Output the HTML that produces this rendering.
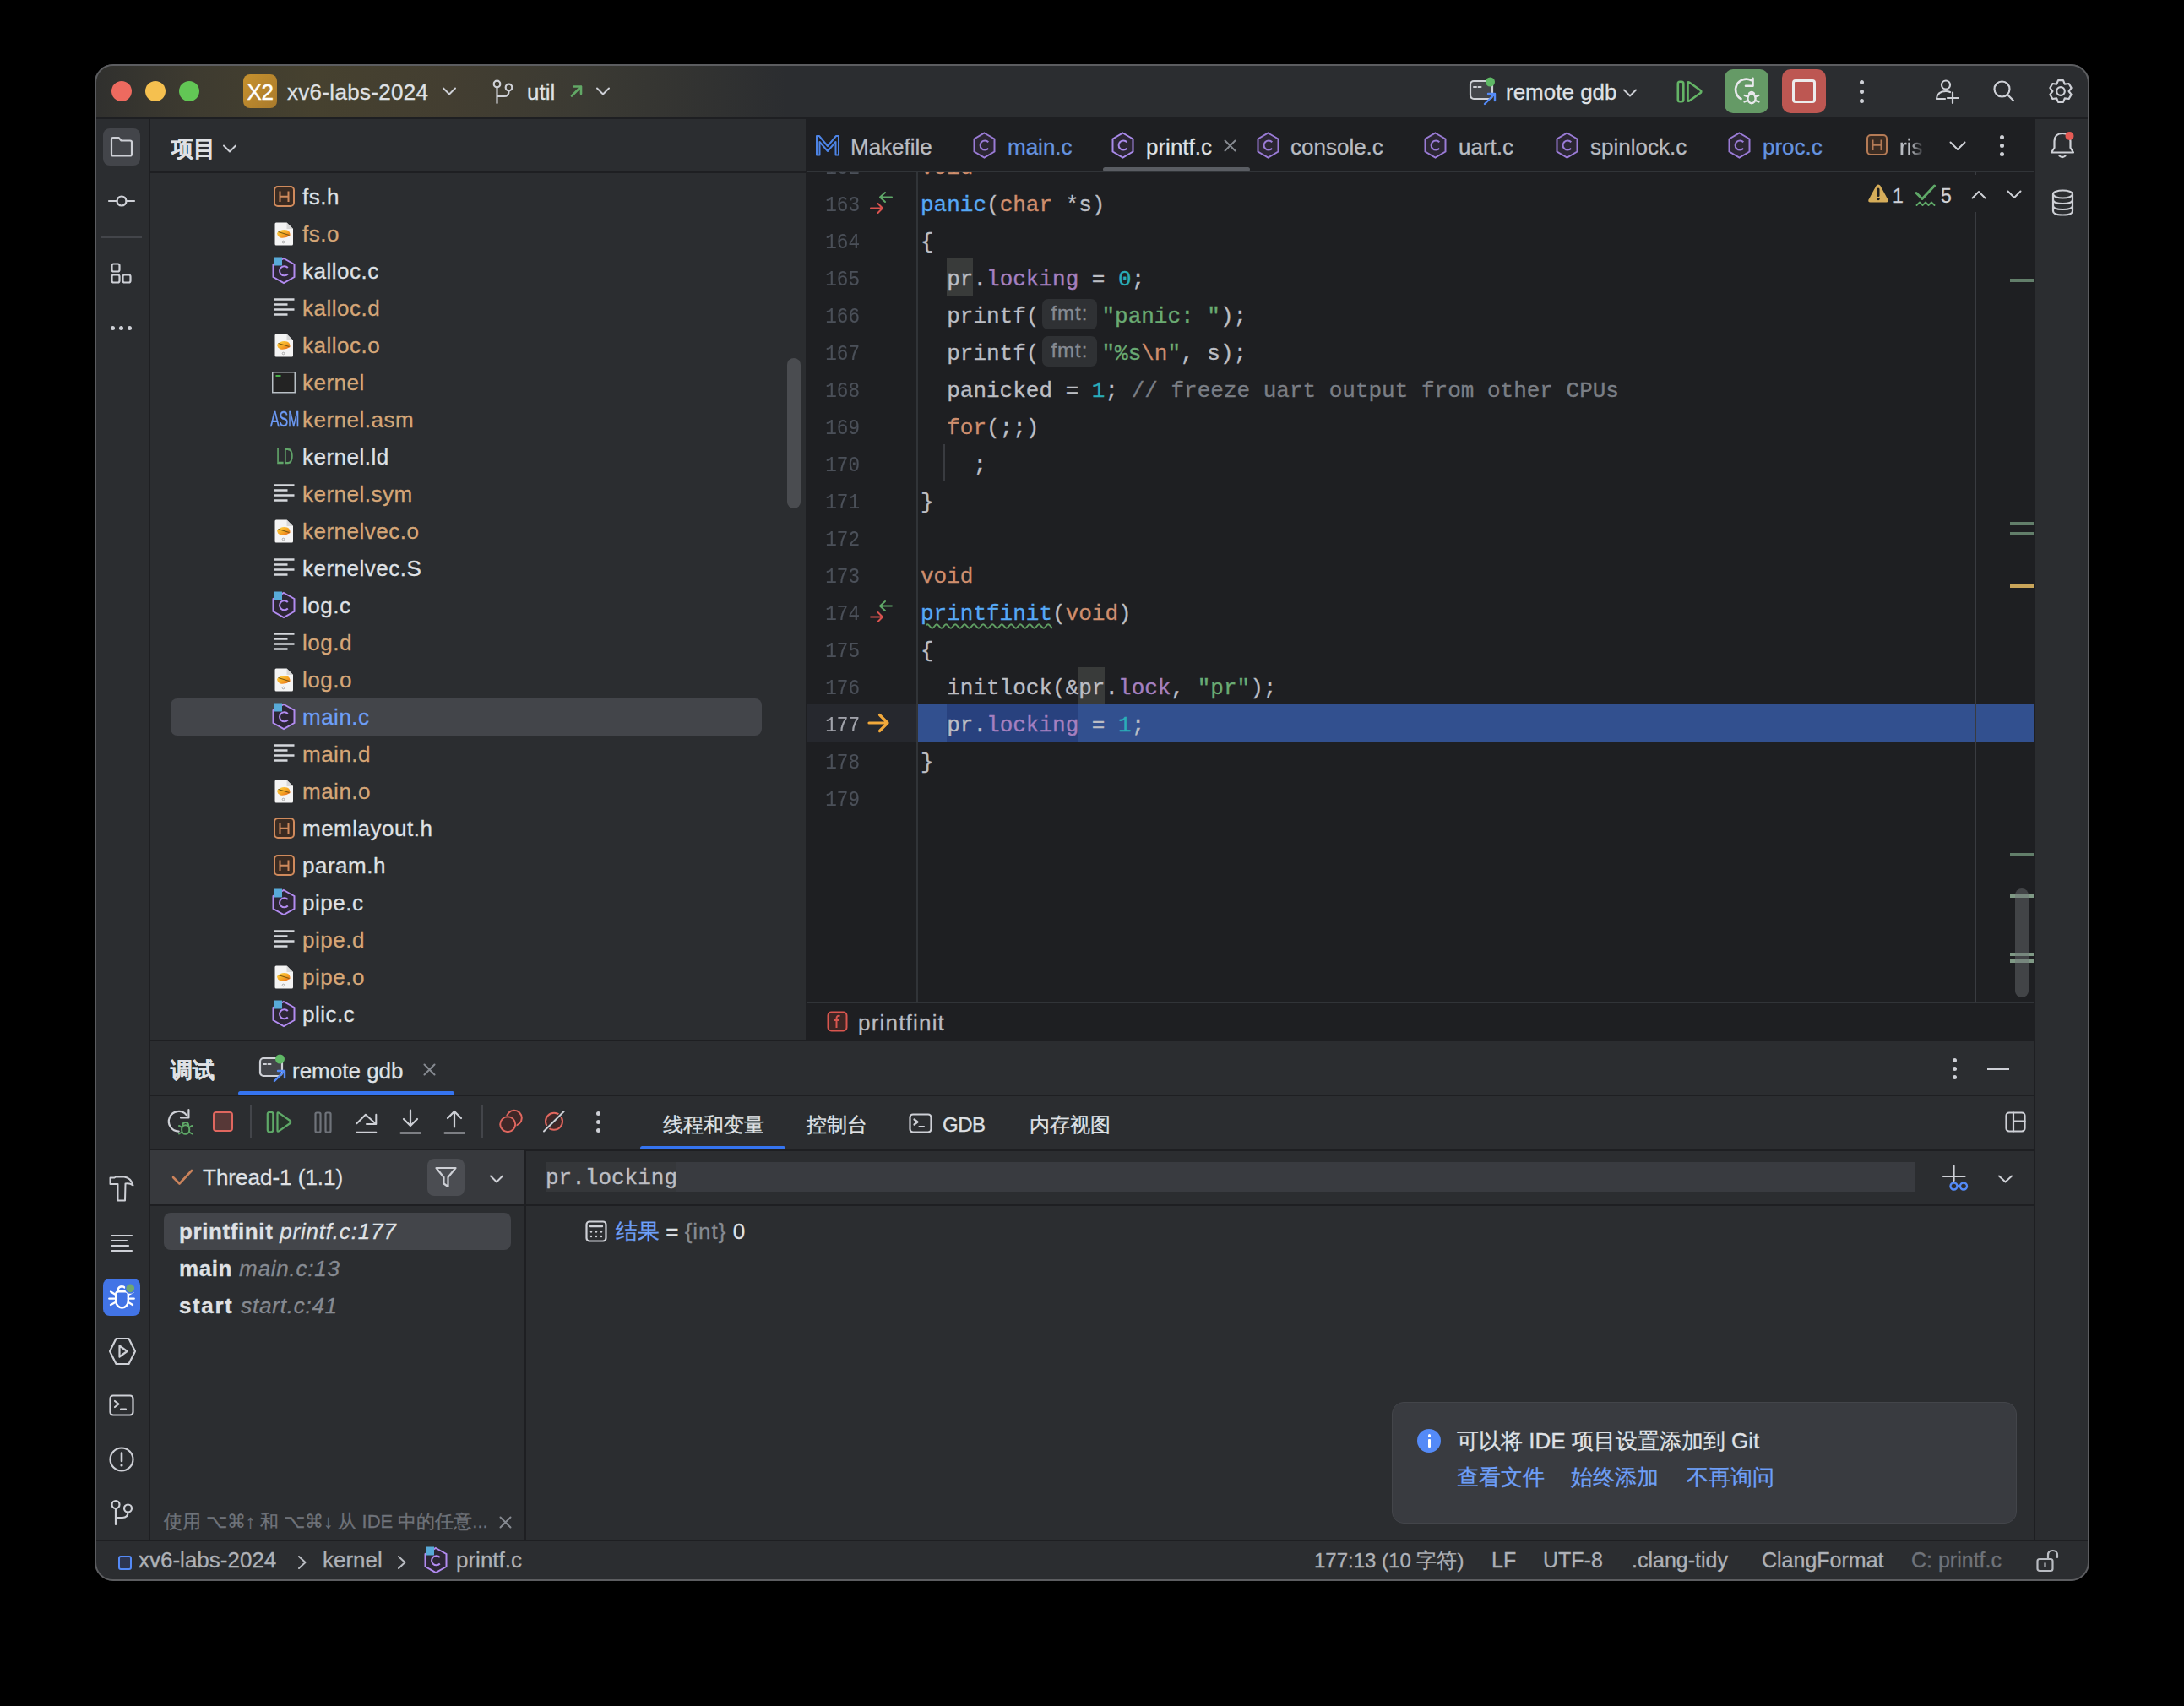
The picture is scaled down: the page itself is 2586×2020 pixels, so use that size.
<!DOCTYPE html>
<html><head><meta charset="utf-8">
<style>
*{margin:0;padding:0;box-sizing:border-box}
html,body{width:2586px;height:2020px;background:#000;overflow:hidden;font-family:"Liberation Sans",sans-serif;color:#dfe1e5}
.a{position:absolute}
.t{position:absolute;white-space:pre;font-size:26px;line-height:30px;-webkit-text-stroke:0.3px currentColor}
.m{font-family:"Liberation Mono",monospace;-webkit-text-stroke:0.35px}
svg.i{position:absolute;overflow:visible;fill:none;stroke:#ced0d6;stroke-width:2.2;stroke-linecap:round;stroke-linejoin:round}
#win{position:absolute;left:0;top:0;width:2586px;height:2020px;background:#2b2d30;clip-path:inset(76px 112px 148px 112px round 22px)}
</style></head><body>
<div id="win">
<!-- title bar -->
<div class="a" style="left:112px;top:76px;width:2362px;height:64px;background:linear-gradient(90deg,#30302e 0px,#3e3b30 120px,#46412f 260px,#433e31 420px,#3b3a33 580px,#2b2d30 820px)"></div>

<!-- traffic lights -->
<div class="a" style="left:132px;top:96px;width:24px;height:24px;border-radius:50%;background:#ee6a5f"></div>
<div class="a" style="left:172px;top:96px;width:24px;height:24px;border-radius:50%;background:#f5c04f"></div>
<div class="a" style="left:212px;top:96px;width:24px;height:24px;border-radius:50%;background:#62c655"></div>
<!-- project badge -->
<div class="a" style="left:288px;top:88px;width:40px;height:40px;border-radius:8px;background:linear-gradient(135deg,#c6912e,#a97a2c)"></div>
<div class="t" style="left:288px;top:94px;width:40px;text-align:center;font-size:26px;color:#fff;letter-spacing:-0.5px;-webkit-text-stroke:0.4px #fff">X2</div>
<div class="t" style="left:340px;top:94px;color:#dfe1e5;letter-spacing:0.3px">xv6-labs-2024</div>
<svg class="i" style="left:524px;top:103px" width="16" height="10"><path d="M1 1.5 L8 8.5 L15 1.5" stroke="#ced0d6" stroke-width="2"/></svg>
<!-- branch -->
<svg class="i" style="left:584px;top:95px" width="24" height="28"><circle cx="4.5" cy="4.5" r="3.8"/><circle cx="18.5" cy="8.5" r="3.8"/><path d="M4.5 8.3 V27 M4.5 19 H13 Q18.5 19 18.5 13"/></svg>
<div class="t" style="left:624px;top:94px">util</div>
<svg class="i" style="left:675px;top:101px" width="15" height="14"><path d="M2 12.5 L13 1.5 M4.5 1.5 H13 V10" stroke="#62a866" stroke-width="2.6"/></svg>
<svg class="i" style="left:706px;top:103px" width="16" height="10"><path d="M1 1.5 L8 8.5 L15 1.5" stroke="#ced0d6" stroke-width="2"/></svg>
<!-- run config -->
<svg class="i" style="left:1740px;top:92px" width="32" height="32"><rect x="1" y="4" width="26" height="21" rx="4" fill="#43454a" stroke="#ced0d6"/><path d="M5 11 H8 M10.5 11 H13.5" stroke-width="2"/><circle cx="24.5" cy="5" r="5.5" fill="#5fb865" stroke="none"/><path d="M18 31 L30 19 M22 19 H30 V27" stroke="#548af7" stroke-width="2.4" /></svg>
<div class="t" style="left:1783px;top:94px">remote gdb</div>
<svg class="i" style="left:1922px;top:105px" width="16" height="10"><path d="M1 1.5 L8 8.5 L15 1.5" stroke="#ced0d6" stroke-width="2"/></svg>
<!-- resume -->
<svg class="i" style="left:1985px;top:95px" width="32" height="27"><rect x="1.8" y="1.8" width="6.5" height="23.5" rx="2.2" stroke="#64b366" stroke-width="2.6"/><path d="M13.5 3.5 Q13.5 1.5 15.5 2.8 L28.5 12 Q30 13.5 28.5 15 L15.5 24.2 Q13.5 25.5 13.5 23.5 Z" stroke="#64b366" stroke-width="2.6"/></svg>
<!-- debug btn -->
<div class="a" style="left:2042px;top:82px;width:52px;height:52px;border-radius:10px;background:#659a66"></div>
<svg class="i" style="left:2054px;top:92px" width="34" height="34"><path d="M7.5 25 A11.5 11.5 0 0 1 19.5 3.2" stroke="#e8e8ec" stroke-width="2.6"/><path d="M21.5 0.8 V9.8 H13" stroke="#e8e8ec" stroke-width="2.6"/><ellipse cx="20" cy="24.5" rx="4.6" ry="5.8" stroke="#e8e8ec" stroke-width="2.4"/><path d="M17 18.5 Q20 15 23 18.5" stroke="#e8e8ec" stroke-width="2.2"/><path d="M11.5 21 L15.5 22.5 M28.5 21 L24.5 22.5 M11.5 28.5 L15.5 27 M28.5 28.5 L24.5 27" stroke="#e8e8ec" stroke-width="2.2"/></svg>
<!-- stop btn -->
<div class="a" style="left:2110px;top:82px;width:52px;height:52px;border-radius:10px;background:#bd5752"></div>
<div class="a" style="left:2122px;top:94px;width:28px;height:28px;border-radius:4px;border:3px solid #ececec"></div>
<!-- kebab -->
<div class="a" style="left:2201.5px;top:94.5px;width:5px;height:5px;border-radius:50%;background:#ced0d6;box-shadow:0 11px 0 #ced0d6,0 22px 0 #ced0d6"></div>
<!-- person add -->
<svg class="i" style="left:2292px;top:94px" width="30" height="30"><circle cx="12" cy="6.5" r="5"/><path d="M1 23 Q2 14 12 14 Q15 14 17 15 M1 23 H11 M20 15.5 V28 M14 22 H27"/></svg>
<!-- search -->
<svg class="i" style="left:2360px;top:95px" width="26" height="26"><circle cx="10.5" cy="10.5" r="9"/><path d="M17 17 L24 24"/></svg>
<!-- gear -->
<svg class="i" style="left:2426px;top:94px" width="28" height="28"><path d="M11.03 1.14 L16.97 1.14 L18.80 5.69 L23.65 5.00 L26.62 10.14 L23.60 14.00 L26.62 17.86 L23.65 23.00 L18.80 22.31 L16.97 26.86 L11.03 26.86 L9.20 22.31 L4.35 23.00 L1.38 17.86 L4.40 14.00 L1.38 10.14 L4.35 5.00 L9.20 5.69 Z" stroke-width="2.2"/><circle cx="14" cy="14" r="4.8"/></svg>
<!-- project panel -->
<div class="t" style="left:203px;top:161px;font-weight:bold">项目</div>
<svg class="i" style="left:264px;top:171px" width="16" height="10"><path d="M1 1.5 L8 8.5 L15 1.5" stroke="#ced0d6" stroke-width="2"/></svg>
<div class="a" style="left:932px;top:424px;width:16px;height:178px;border-radius:8px;background:#4a4c50"></div>
<svg class="a" style="left:322px;top:219px" width="28" height="28" viewBox="0 0 28 28"><rect x="3" y="2" width="23" height="23" rx="4" fill="#3a2b22" stroke="#cf8a5c" stroke-width="2"/><path d="M9.5 7.5 V20 M19.5 7.5 V20 M9.5 13.8 H19.5" stroke="#cf8a5c" stroke-width="2" fill="none"/></svg>
<div class="t" style="left:358px;top:218px;color:#dfe1e5;letter-spacing:0.5px">fs.h</div>
<svg class="a" style="left:324px;top:262px" width="24" height="30" viewBox="0 0 24 30"><defs><linearGradient id="og277" x1="0" y1="0" x2="1" y2="1"><stop offset="0" stop-color="#ffd84a"/><stop offset="0.55" stop-color="#f5a524"/><stop offset="1" stop-color="#e8611c"/></linearGradient></defs><path d="M3 1.5 H15.5 L23 9 V27 Q23 28.5 21.5 28.5 H3 Q1.5 28.5 1.5 27 V3 Q1.5 1.5 3 1.5 Z" fill="#f4f4f4"/><path d="M15.5 1.5 V9 H23 Z" fill="#d8d8d8"/><path d="M4 14 Q9 8.5 16 10.5 Q20 12 19.5 17 Q14 20.5 8 19.5 Q4.5 18 4 14 Z" fill="url(#og277)"/><path d="M5.5 12.5 L18.5 16.5" stroke="#7a5a10" stroke-width="1.1"/><circle cx="11.5" cy="24.5" r="1.3" fill="none" stroke="#999" stroke-width="0.8"/></svg>
<div class="t" style="left:358px;top:262px;color:#d5a677;letter-spacing:0.5px">fs.o</div>
<svg class="a" style="left:321px;top:304px" width="30" height="33" viewBox="0 0 30 33"><path d="M15 2 L27.5 9 V24 L15 31 L2.5 24 V9 Z" fill="#2c2635" stroke="#b28bf0" stroke-width="2"/><path d="M19.8 13 A5.6 5.6 0 1 0 19.8 20.5" fill="none" stroke="#b28bf0" stroke-width="2"/><rect x="3" y="0.5" width="10" height="10" fill="#58aad8"/></svg>
<div class="t" style="left:358px;top:306px;color:#dfe1e5;letter-spacing:0.5px">kalloc.c</div>
<svg class="a" style="left:324px;top:351px" width="26" height="26" viewBox="0 0 26 26"><path d="M1 3.5 H24.5 M1 9.5 H16.5 M1 15.5 H24.5 M1 21.5 H16.5" stroke="#d5d7dc" stroke-width="2.6" fill="none"/></svg>
<div class="t" style="left:358px;top:350px;color:#d5a677;letter-spacing:0.5px">kalloc.d</div>
<svg class="a" style="left:324px;top:394px" width="24" height="30" viewBox="0 0 24 30"><defs><linearGradient id="og409" x1="0" y1="0" x2="1" y2="1"><stop offset="0" stop-color="#ffd84a"/><stop offset="0.55" stop-color="#f5a524"/><stop offset="1" stop-color="#e8611c"/></linearGradient></defs><path d="M3 1.5 H15.5 L23 9 V27 Q23 28.5 21.5 28.5 H3 Q1.5 28.5 1.5 27 V3 Q1.5 1.5 3 1.5 Z" fill="#f4f4f4"/><path d="M15.5 1.5 V9 H23 Z" fill="#d8d8d8"/><path d="M4 14 Q9 8.5 16 10.5 Q20 12 19.5 17 Q14 20.5 8 19.5 Q4.5 18 4 14 Z" fill="url(#og409)"/><path d="M5.5 12.5 L18.5 16.5" stroke="#7a5a10" stroke-width="1.1"/><circle cx="11.5" cy="24.5" r="1.3" fill="none" stroke="#999" stroke-width="0.8"/></svg>
<div class="t" style="left:358px;top:394px;color:#d5a677;letter-spacing:0.5px">kalloc.o</div>
<svg class="a" style="left:322px;top:440px" width="28" height="26" viewBox="0 0 28 26"><rect x="0.75" y="0.75" width="26.5" height="24" fill="#232323" stroke="#b9c0c6" stroke-width="1.5"/><path d="M4.5 5 H10.5" stroke="#4fc04f" stroke-width="1.8"/></svg>
<div class="t" style="left:358px;top:438px;color:#d5a677;letter-spacing:0.5px">kernel</div>
<div class="t" style="left:320px;top:481px;font-size:26px;color:#6d9bf7;transform:scaleX(0.62);transform-origin:0 0;letter-spacing:-0.5px">ASM</div>
<div class="t" style="left:358px;top:482px;color:#d5a677;letter-spacing:0.5px">kernel.asm</div>
<div class="t" style="left:327px;top:525px;font-size:26px;color:#62a56a;transform:scaleX(0.62);transform-origin:0 0;letter-spacing:-0.5px">LD</div>
<div class="t" style="left:358px;top:526px;color:#dfe1e5;letter-spacing:0.5px">kernel.ld</div>
<svg class="a" style="left:324px;top:571px" width="26" height="26" viewBox="0 0 26 26"><path d="M1 3.5 H24.5 M1 9.5 H16.5 M1 15.5 H24.5 M1 21.5 H16.5" stroke="#d5d7dc" stroke-width="2.6" fill="none"/></svg>
<div class="t" style="left:358px;top:570px;color:#d5a677;letter-spacing:0.5px">kernel.sym</div>
<svg class="a" style="left:324px;top:614px" width="24" height="30" viewBox="0 0 24 30"><defs><linearGradient id="og629" x1="0" y1="0" x2="1" y2="1"><stop offset="0" stop-color="#ffd84a"/><stop offset="0.55" stop-color="#f5a524"/><stop offset="1" stop-color="#e8611c"/></linearGradient></defs><path d="M3 1.5 H15.5 L23 9 V27 Q23 28.5 21.5 28.5 H3 Q1.5 28.5 1.5 27 V3 Q1.5 1.5 3 1.5 Z" fill="#f4f4f4"/><path d="M15.5 1.5 V9 H23 Z" fill="#d8d8d8"/><path d="M4 14 Q9 8.5 16 10.5 Q20 12 19.5 17 Q14 20.5 8 19.5 Q4.5 18 4 14 Z" fill="url(#og629)"/><path d="M5.5 12.5 L18.5 16.5" stroke="#7a5a10" stroke-width="1.1"/><circle cx="11.5" cy="24.5" r="1.3" fill="none" stroke="#999" stroke-width="0.8"/></svg>
<div class="t" style="left:358px;top:614px;color:#d5a677;letter-spacing:0.5px">kernelvec.o</div>
<svg class="a" style="left:324px;top:659px" width="26" height="26" viewBox="0 0 26 26"><path d="M1 3.5 H24.5 M1 9.5 H16.5 M1 15.5 H24.5 M1 21.5 H16.5" stroke="#d5d7dc" stroke-width="2.6" fill="none"/></svg>
<div class="t" style="left:358px;top:658px;color:#dfe1e5;letter-spacing:0.5px">kernelvec.S</div>
<svg class="a" style="left:321px;top:700px" width="30" height="33" viewBox="0 0 30 33"><path d="M15 2 L27.5 9 V24 L15 31 L2.5 24 V9 Z" fill="#2c2635" stroke="#b28bf0" stroke-width="2"/><path d="M19.8 13 A5.6 5.6 0 1 0 19.8 20.5" fill="none" stroke="#b28bf0" stroke-width="2"/><rect x="3" y="0.5" width="10" height="10" fill="#58aad8"/></svg>
<div class="t" style="left:358px;top:702px;color:#dfe1e5;letter-spacing:0.5px">log.c</div>
<svg class="a" style="left:324px;top:747px" width="26" height="26" viewBox="0 0 26 26"><path d="M1 3.5 H24.5 M1 9.5 H16.5 M1 15.5 H24.5 M1 21.5 H16.5" stroke="#d5d7dc" stroke-width="2.6" fill="none"/></svg>
<div class="t" style="left:358px;top:746px;color:#d5a677;letter-spacing:0.5px">log.d</div>
<svg class="a" style="left:324px;top:790px" width="24" height="30" viewBox="0 0 24 30"><defs><linearGradient id="og805" x1="0" y1="0" x2="1" y2="1"><stop offset="0" stop-color="#ffd84a"/><stop offset="0.55" stop-color="#f5a524"/><stop offset="1" stop-color="#e8611c"/></linearGradient></defs><path d="M3 1.5 H15.5 L23 9 V27 Q23 28.5 21.5 28.5 H3 Q1.5 28.5 1.5 27 V3 Q1.5 1.5 3 1.5 Z" fill="#f4f4f4"/><path d="M15.5 1.5 V9 H23 Z" fill="#d8d8d8"/><path d="M4 14 Q9 8.5 16 10.5 Q20 12 19.5 17 Q14 20.5 8 19.5 Q4.5 18 4 14 Z" fill="url(#og805)"/><path d="M5.5 12.5 L18.5 16.5" stroke="#7a5a10" stroke-width="1.1"/><circle cx="11.5" cy="24.5" r="1.3" fill="none" stroke="#999" stroke-width="0.8"/></svg>
<div class="t" style="left:358px;top:790px;color:#d5a677;letter-spacing:0.5px">log.o</div>
<div class="a" style="left:202px;top:827px;width:700px;height:44px;border-radius:8px;background:#43454a"></div>
<svg class="a" style="left:321px;top:832px" width="30" height="33" viewBox="0 0 30 33"><path d="M15 2 L27.5 9 V24 L15 31 L2.5 24 V9 Z" fill="#2c2635" stroke="#b28bf0" stroke-width="2"/><path d="M19.8 13 A5.6 5.6 0 1 0 19.8 20.5" fill="none" stroke="#b28bf0" stroke-width="2"/><rect x="3" y="0.5" width="10" height="10" fill="#58aad8"/></svg>
<div class="t" style="left:358px;top:834px;color:#6e9ff7;letter-spacing:0.5px">main.c</div>
<svg class="a" style="left:324px;top:879px" width="26" height="26" viewBox="0 0 26 26"><path d="M1 3.5 H24.5 M1 9.5 H16.5 M1 15.5 H24.5 M1 21.5 H16.5" stroke="#d5d7dc" stroke-width="2.6" fill="none"/></svg>
<div class="t" style="left:358px;top:878px;color:#d5a677;letter-spacing:0.5px">main.d</div>
<svg class="a" style="left:324px;top:922px" width="24" height="30" viewBox="0 0 24 30"><defs><linearGradient id="og937" x1="0" y1="0" x2="1" y2="1"><stop offset="0" stop-color="#ffd84a"/><stop offset="0.55" stop-color="#f5a524"/><stop offset="1" stop-color="#e8611c"/></linearGradient></defs><path d="M3 1.5 H15.5 L23 9 V27 Q23 28.5 21.5 28.5 H3 Q1.5 28.5 1.5 27 V3 Q1.5 1.5 3 1.5 Z" fill="#f4f4f4"/><path d="M15.5 1.5 V9 H23 Z" fill="#d8d8d8"/><path d="M4 14 Q9 8.5 16 10.5 Q20 12 19.5 17 Q14 20.5 8 19.5 Q4.5 18 4 14 Z" fill="url(#og937)"/><path d="M5.5 12.5 L18.5 16.5" stroke="#7a5a10" stroke-width="1.1"/><circle cx="11.5" cy="24.5" r="1.3" fill="none" stroke="#999" stroke-width="0.8"/></svg>
<div class="t" style="left:358px;top:922px;color:#d5a677;letter-spacing:0.5px">main.o</div>
<svg class="a" style="left:322px;top:967px" width="28" height="28" viewBox="0 0 28 28"><rect x="3" y="2" width="23" height="23" rx="4" fill="#3a2b22" stroke="#cf8a5c" stroke-width="2"/><path d="M9.5 7.5 V20 M19.5 7.5 V20 M9.5 13.8 H19.5" stroke="#cf8a5c" stroke-width="2" fill="none"/></svg>
<div class="t" style="left:358px;top:966px;color:#dfe1e5;letter-spacing:0.5px">memlayout.h</div>
<svg class="a" style="left:322px;top:1011px" width="28" height="28" viewBox="0 0 28 28"><rect x="3" y="2" width="23" height="23" rx="4" fill="#3a2b22" stroke="#cf8a5c" stroke-width="2"/><path d="M9.5 7.5 V20 M19.5 7.5 V20 M9.5 13.8 H19.5" stroke="#cf8a5c" stroke-width="2" fill="none"/></svg>
<div class="t" style="left:358px;top:1010px;color:#dfe1e5;letter-spacing:0.5px">param.h</div>
<svg class="a" style="left:321px;top:1052px" width="30" height="33" viewBox="0 0 30 33"><path d="M15 2 L27.5 9 V24 L15 31 L2.5 24 V9 Z" fill="#2c2635" stroke="#b28bf0" stroke-width="2"/><path d="M19.8 13 A5.6 5.6 0 1 0 19.8 20.5" fill="none" stroke="#b28bf0" stroke-width="2"/><rect x="3" y="0.5" width="10" height="10" fill="#58aad8"/></svg>
<div class="t" style="left:358px;top:1054px;color:#dfe1e5;letter-spacing:0.5px">pipe.c</div>
<svg class="a" style="left:324px;top:1099px" width="26" height="26" viewBox="0 0 26 26"><path d="M1 3.5 H24.5 M1 9.5 H16.5 M1 15.5 H24.5 M1 21.5 H16.5" stroke="#d5d7dc" stroke-width="2.6" fill="none"/></svg>
<div class="t" style="left:358px;top:1098px;color:#d5a677;letter-spacing:0.5px">pipe.d</div>
<svg class="a" style="left:324px;top:1142px" width="24" height="30" viewBox="0 0 24 30"><defs><linearGradient id="og1157" x1="0" y1="0" x2="1" y2="1"><stop offset="0" stop-color="#ffd84a"/><stop offset="0.55" stop-color="#f5a524"/><stop offset="1" stop-color="#e8611c"/></linearGradient></defs><path d="M3 1.5 H15.5 L23 9 V27 Q23 28.5 21.5 28.5 H3 Q1.5 28.5 1.5 27 V3 Q1.5 1.5 3 1.5 Z" fill="#f4f4f4"/><path d="M15.5 1.5 V9 H23 Z" fill="#d8d8d8"/><path d="M4 14 Q9 8.5 16 10.5 Q20 12 19.5 17 Q14 20.5 8 19.5 Q4.5 18 4 14 Z" fill="url(#og1157)"/><path d="M5.5 12.5 L18.5 16.5" stroke="#7a5a10" stroke-width="1.1"/><circle cx="11.5" cy="24.5" r="1.3" fill="none" stroke="#999" stroke-width="0.8"/></svg>
<div class="t" style="left:358px;top:1142px;color:#d5a677;letter-spacing:0.5px">pipe.o</div>
<svg class="a" style="left:321px;top:1184px" width="30" height="33" viewBox="0 0 30 33"><path d="M15 2 L27.5 9 V24 L15 31 L2.5 24 V9 Z" fill="#2c2635" stroke="#b28bf0" stroke-width="2"/><path d="M19.8 13 A5.6 5.6 0 1 0 19.8 20.5" fill="none" stroke="#b28bf0" stroke-width="2"/><rect x="3" y="0.5" width="10" height="10" fill="#58aad8"/></svg>
<div class="t" style="left:358px;top:1186px;color:#dfe1e5;letter-spacing:0.5px">plic.c</div>
<!-- end project -->
<!-- left stripe icons -->
<div class="a" style="left:122px;top:152px;width:44px;height:44px;border-radius:8px;background:#43454a"></div>
<svg class="i" style="left:130px;top:161px" width="28" height="26"><path d="M2 4 Q2 2 4 2 H10.5 L13.5 5.5 H24 Q26 5.5 26 7.5 V21.5 Q26 23.5 24 23.5 H4 Q2 23.5 2 21.5 Z"/></svg>
<svg class="i" style="left:128px;top:230px" width="32" height="16"><circle cx="16" cy="8" r="5.5"/><path d="M1 8 H10.5 M21.5 8 H31"/></svg>
<div class="a" style="left:120px;top:280px;width:48px;height:2px;background:#43454a"></div>
<svg class="i" style="left:131px;top:311px" width="26" height="26"><rect x="1.5" y="1.5" width="9" height="9" rx="2"/><rect x="1.5" y="14.5" width="9" height="9" rx="2"/><rect x="14.5" y="14.5" width="9" height="9" rx="2"/></svg>
<div class="a" style="left:131px;top:386px;width:5px;height:5px;border-radius:50%;background:#ced0d6;box-shadow:10px 0 0 #ced0d6,20px 0 0 #ced0d6"></div>
<!-- bottom group -->
<svg class="i" style="left:128px;top:1390px" width="32" height="34"><path d="M2.5 4.5 H7.5 L9 3.5 H19 Q27 4.5 29.5 13.5 Q25.5 10.5 20.5 11.5 L20 31.5 H11.5 L11.5 12 H2.5 Z" stroke-width="2"/></svg>
<svg class="i" style="left:131px;top:1459px" width="28" height="26"><path d="M1.5 4 H25 M1.5 10 H19 M1.5 16 H21 M1.5 22 H25" stroke-width="2.2"/></svg>
<div class="a" style="left:122px;top:1514px;width:44px;height:44px;border-radius:8px;background:#4274e6"></div>
<svg class="i" style="left:128px;top:1518px" width="34" height="34"><path d="M9.2 14.5 Q9.2 11.2 12.5 11.2 H20.5 Q23.8 11.2 23.8 14.5 V22.5 A7.3 8 0 0 1 9.2 22.5 Z" stroke="#fff" stroke-width="2.4"/><path d="M11.5 10 Q12 5.2 16.5 5.2 Q18.5 5.2 19.5 6.5" stroke="#fff" stroke-width="2.4"/><path d="M3.1 11.5 L8.5 14.8 M1.3 19.6 H8.5 M3 27 L8.5 24 M30.7 19.6 H24 M29 27 L24 24 M29.5 12 L24.5 14.8" stroke="#fff" stroke-width="2.4"/><circle cx="26.3" cy="7.4" r="5.6" fill="#71a86f" stroke="#4274e6" stroke-width="1.5"/></svg>
<svg class="i" style="left:128px;top:1583px" width="34" height="34"><path d="M9.5 2 H24.5 L32 17 L24.5 32 H9.5 L2 17 Z"/><path d="M13.5 10.5 L22.5 17 L13.5 23.5 Z"/></svg>
<svg class="i" style="left:129px;top:1651px" width="30" height="26"><rect x="1.5" y="1.5" width="27" height="23" rx="3.5"/><path d="M7 8 L11.5 11.5 L7 15 M14 17.5 H20"/></svg>
<svg class="i" style="left:129px;top:1713px" width="30" height="30"><circle cx="15" cy="15" r="13.5"/><path d="M15 7.5 V17" stroke-width="2.6"/><circle cx="15" cy="22" r="1.6" fill="#ced0d6" stroke="none"/></svg>
<svg class="i" style="left:131px;top:1776px" width="26" height="30"><circle cx="6" cy="5.5" r="4.5"/><circle cx="20.5" cy="10" r="4.5"/><path d="M6 10 V29 M6 21 H14 Q20.5 21 20.5 14.5"/></svg>
<!-- right stripe icons -->
<svg class="i" style="left:2427px;top:156px" width="30" height="34"><path d="M15 2 Q6 2 5.5 11 V19 L2 24.5 H28 L24.5 19 V11 Q24 2 15 2 Z"/><path d="M11.5 28.5 Q15 31.5 18.5 28.5"/><circle cx="23.5" cy="5" r="5" fill="#e55b55" stroke="none"/></svg>
<svg class="i" style="left:2429px;top:224px" width="28" height="32"><ellipse cx="13.5" cy="6" rx="11.5" ry="4.5"/><path d="M2 6 V26 Q2 30.5 13.5 30.5 Q25 30.5 25 26 V6 M2 12.5 Q2 17 13.5 17 Q25 17 25 12.5 M2 19.5 Q2 24 13.5 24 Q25 24 25 19.5"/></svg>
<!-- left stripe border -->
<div class="a" style="left:176px;top:140px;width:2px;height:1684px;background:#1e1f22"></div>
<!-- right stripe border -->
<div class="a" style="left:2408px;top:140px;width:2px;height:1684px;background:#1e1f22"></div>
<!-- title bottom border -->
<div class="a" style="left:112px;top:139px;width:2362px;height:2px;background:#1e1f22"></div>
<!-- project header border -->
<div class="a" style="left:177px;top:203px;width:778px;height:2px;background:#1e1f22"></div>
<!-- editor -->
<div class="a" style="left:954px;top:140px;width:1455px;height:1093px;background:#1e1f22"></div>
<div class="a" style="left:954px;top:140px;width:2px;height:1093px;background:#1e1f22"></div>
<!-- editor content -->
<div class="a" style="left:955px;top:834px;width:131px;height:44px;background:#26282e"></div>
<div class="a" style="left:1086px;top:834px;width:1322px;height:44px;background:#32508f"></div>
<div class="a" style="left:1121px;top:306px;width:31px;height:44px;background:#393b3a"></div>
<div class="a" style="left:1277px;top:790px;width:31px;height:44px;background:#393b3a"></div>
<div class="a" style="left:1121px;top:834px;width:156px;height:44px;background:#28417e"></div>
<div class="a" style="left:1085px;top:203px;width:1.5px;height:984px;background:#313438"></div>
<div class="a" style="left:2338px;top:251px;width:1.5px;height:936px;background:#393b40"></div>
<div class="a" style="left:2338px;top:203px;width:1.5px;height:4px;background:#393b40"></div>
<div class="a" style="left:1117px;top:526px;width:1.5px;height:43px;background:#393b40"></div>
<div class="t m" style="left:958px;top:184px;width:60px;text-align:right;color:#4b5059;transform:scaleX(0.87);transform-origin:100% 0;-webkit-text-stroke:0.15px #4b5059">162</div>
<div class="t m" style="left:1090px;top:184px;color:#cf8e6d">void</div>
<div class="t m" style="left:958px;top:228px;width:60px;text-align:right;color:#4b5059;transform:scaleX(0.87);transform-origin:100% 0;-webkit-text-stroke:0.15px #4b5059">163</div>
<div class="t m" style="left:1090px;top:228px;letter-spacing:0"><span style="color:#56a8f5">panic</span><span style="color:#bcbec4">(</span><span style="color:#cf8e6d">char</span><span style="color:#bcbec4"> *s)</span></div>
<div class="t m" style="left:958px;top:272px;width:60px;text-align:right;color:#4b5059;transform:scaleX(0.87);transform-origin:100% 0;-webkit-text-stroke:0.15px #4b5059">164</div>
<div class="t m" style="left:1090px;top:272px;letter-spacing:0"><span style="color:#bcbec4">{</span></div>
<div class="t m" style="left:958px;top:316px;width:60px;text-align:right;color:#4b5059;transform:scaleX(0.87);transform-origin:100% 0;-webkit-text-stroke:0.15px #4b5059">165</div>
<div class="t m" style="left:1090px;top:316px;letter-spacing:0"><span style="color:#bcbec4">  </span><span style="color:#bcbec4">pr</span><span style="color:#bcbec4">.</span><span style="color:#a580c0">locking</span><span style="color:#bcbec4"> = </span><span style="color:#2aacb8">0</span><span style="color:#bcbec4">;</span></div>
<div class="t m" style="left:958px;top:360px;width:60px;text-align:right;color:#4b5059;transform:scaleX(0.87);transform-origin:100% 0;-webkit-text-stroke:0.15px #4b5059">166</div>
<div class="t m" style="left:1090px;top:360px;letter-spacing:0"><span style="color:#bcbec4">  printf(</span><span style="display:inline-block;width:74px;height:30px;position:relative;vertical-align:top"><span style="position:absolute;left:4px;top:-6px;width:65px;height:36px;border-radius:7px;background:#2f3134"></span><span style="position:absolute;left:14px;top:-4px;font-family:'Liberation Sans',sans-serif;font-size:24px;letter-spacing:1px;color:#868a91">fmt:</span></span><span style="color:#6aab73">"panic: "</span><span style="color:#bcbec4">);</span></div>
<div class="t m" style="left:958px;top:404px;width:60px;text-align:right;color:#4b5059;transform:scaleX(0.87);transform-origin:100% 0;-webkit-text-stroke:0.15px #4b5059">167</div>
<div class="t m" style="left:1090px;top:404px;letter-spacing:0"><span style="color:#bcbec4">  printf(</span><span style="display:inline-block;width:74px;height:30px;position:relative;vertical-align:top"><span style="position:absolute;left:4px;top:-6px;width:65px;height:36px;border-radius:7px;background:#2f3134"></span><span style="position:absolute;left:14px;top:-4px;font-family:'Liberation Sans',sans-serif;font-size:24px;letter-spacing:1px;color:#868a91">fmt:</span></span><span style="color:#6aab73">"%s</span><span style="color:#cf8e6d">\n</span><span style="color:#6aab73">"</span><span style="color:#bcbec4">, s);</span></div>
<div class="t m" style="left:958px;top:448px;width:60px;text-align:right;color:#4b5059;transform:scaleX(0.87);transform-origin:100% 0;-webkit-text-stroke:0.15px #4b5059">168</div>
<div class="t m" style="left:1090px;top:448px;letter-spacing:0"><span style="color:#bcbec4">  panicked = </span><span style="color:#2aacb8">1</span><span style="color:#bcbec4">; </span><span style="color:#7a7e85">// freeze uart output from other CPUs</span></div>
<div class="t m" style="left:958px;top:492px;width:60px;text-align:right;color:#4b5059;transform:scaleX(0.87);transform-origin:100% 0;-webkit-text-stroke:0.15px #4b5059">169</div>
<div class="t m" style="left:1090px;top:492px;letter-spacing:0"><span style="color:#bcbec4">  </span><span style="color:#cf8e6d">for</span><span style="color:#bcbec4">(;;)</span></div>
<div class="t m" style="left:958px;top:536px;width:60px;text-align:right;color:#4b5059;transform:scaleX(0.87);transform-origin:100% 0;-webkit-text-stroke:0.15px #4b5059">170</div>
<div class="t m" style="left:1090px;top:536px;letter-spacing:0"><span style="color:#bcbec4">    ;</span></div>
<div class="t m" style="left:958px;top:580px;width:60px;text-align:right;color:#4b5059;transform:scaleX(0.87);transform-origin:100% 0;-webkit-text-stroke:0.15px #4b5059">171</div>
<div class="t m" style="left:1090px;top:580px;letter-spacing:0"><span style="color:#bcbec4">}</span></div>
<div class="t m" style="left:958px;top:624px;width:60px;text-align:right;color:#4b5059;transform:scaleX(0.87);transform-origin:100% 0;-webkit-text-stroke:0.15px #4b5059">172</div>
<div class="t m" style="left:958px;top:668px;width:60px;text-align:right;color:#4b5059;transform:scaleX(0.87);transform-origin:100% 0;-webkit-text-stroke:0.15px #4b5059">173</div>
<div class="t m" style="left:1090px;top:668px;letter-spacing:0"><span style="color:#cf8e6d">void</span></div>
<div class="t m" style="left:958px;top:712px;width:60px;text-align:right;color:#4b5059;transform:scaleX(0.87);transform-origin:100% 0;-webkit-text-stroke:0.15px #4b5059">174</div>
<div class="t m" style="left:1090px;top:712px;letter-spacing:0"><span style="color:#56a8f5;text-decoration:underline wavy #5f9e62;text-decoration-thickness:1.5px;text-underline-offset:4px">printfinit</span><span style="color:#bcbec4">(</span><span style="color:#cf8e6d">void</span><span style="color:#bcbec4">)</span></div>
<div class="t m" style="left:958px;top:756px;width:60px;text-align:right;color:#4b5059;transform:scaleX(0.87);transform-origin:100% 0;-webkit-text-stroke:0.15px #4b5059">175</div>
<div class="t m" style="left:1090px;top:756px;letter-spacing:0"><span style="color:#bcbec4">{</span></div>
<div class="t m" style="left:958px;top:800px;width:60px;text-align:right;color:#4b5059;transform:scaleX(0.87);transform-origin:100% 0;-webkit-text-stroke:0.15px #4b5059">176</div>
<div class="t m" style="left:1090px;top:800px;letter-spacing:0"><span style="color:#bcbec4">  initlock(&amp;</span><span style="color:#bcbec4">pr</span><span style="color:#bcbec4">.</span><span style="color:#a580c0">lock</span><span style="color:#bcbec4">, </span><span style="color:#6aab73">"pr"</span><span style="color:#bcbec4">);</span></div>
<div class="t m" style="left:958px;top:844px;width:60px;text-align:right;color:#a1a3ab;transform:scaleX(0.87);transform-origin:100% 0;-webkit-text-stroke:0.15px #a1a3ab">177</div>
<div class="t m" style="left:1090px;top:844px;letter-spacing:0"><span style="color:#bcbec4">  </span><span style="color:#bcbec4">pr</span><span style="color:#bcbec4">.</span><span style="color:#a580c0">locking</span><span style="color:#bcbec4"> = </span><span style="color:#2aacb8">1</span><span style="color:#bcbec4">;</span></div>
<div class="t m" style="left:958px;top:888px;width:60px;text-align:right;color:#4b5059;transform:scaleX(0.87);transform-origin:100% 0;-webkit-text-stroke:0.15px #4b5059">178</div>
<div class="t m" style="left:1090px;top:888px;letter-spacing:0"><span style="color:#bcbec4">}</span></div>
<div class="t m" style="left:958px;top:932px;width:60px;text-align:right;color:#4b5059;transform:scaleX(0.87);transform-origin:100% 0;-webkit-text-stroke:0.15px #4b5059">179</div>
<div class="a" style="left:956px;top:140px;width:1452px;height:62px;background:#1e1f22;z-index:2"></div>
<div class="a" style="left:956px;top:202px;width:1452px;height:1.5px;background:#313438;z-index:2"></div>
<svg class="a" style="left:965px;top:159px;z-index:3;" width="32" height="26" viewBox="0 0 32 26"><path d="M2 24.5 V2 H5 L15 14 L25 2 H28 V24.5 H24.5 V9 L15 20 L5.5 9 V24.5 Z" fill="none" stroke="#4d84e6" stroke-width="2" stroke-linejoin="round"/></svg>
<div class="t" style="left:1007px;top:159px;color:#b9bcc2;z-index:3;">Makefile</div>
<svg class="a" style="z-index:3;left:1151px;top:156px" width="30" height="32" viewBox="0 0 30 32"><path d="M14.5 1.5 L26.5 8.5 V23.5 L14.5 30.5 L2.5 23.5 V8.5 Z" fill="#2b2633" stroke="#9a7bd6" stroke-width="2"/><path d="M19.3 12.2 A5.6 5.6 0 1 0 19.3 19.8" fill="none" stroke="#9a7bd6" stroke-width="2"/></svg>
<div class="t" style="left:1193px;top:159px;color:#6593e0;z-index:3;">main.c</div>
<svg class="a" style="z-index:3;left:1315px;top:156px" width="30" height="32" viewBox="0 0 30 32"><path d="M14.5 1.5 L26.5 8.5 V23.5 L14.5 30.5 L2.5 23.5 V8.5 Z" fill="#2b2633" stroke="#a98aea" stroke-width="2"/><path d="M19.3 12.2 A5.6 5.6 0 1 0 19.3 19.8" fill="none" stroke="#a98aea" stroke-width="2"/></svg>
<div class="t" style="left:1357px;top:159px;color:#dfe1e5;z-index:3;">printf.c</div>
<svg class="a" style="z-index:3;left:1487px;top:156px" width="30" height="32" viewBox="0 0 30 32"><path d="M14.5 1.5 L26.5 8.5 V23.5 L14.5 30.5 L2.5 23.5 V8.5 Z" fill="#2b2633" stroke="#9a7bd6" stroke-width="2"/><path d="M19.3 12.2 A5.6 5.6 0 1 0 19.3 19.8" fill="none" stroke="#9a7bd6" stroke-width="2"/></svg>
<div class="t" style="left:1528px;top:159px;color:#b9bcc2;z-index:3;">console.c</div>
<svg class="a" style="z-index:3;left:1685px;top:156px" width="30" height="32" viewBox="0 0 30 32"><path d="M14.5 1.5 L26.5 8.5 V23.5 L14.5 30.5 L2.5 23.5 V8.5 Z" fill="#2b2633" stroke="#9a7bd6" stroke-width="2"/><path d="M19.3 12.2 A5.6 5.6 0 1 0 19.3 19.8" fill="none" stroke="#9a7bd6" stroke-width="2"/></svg>
<div class="t" style="left:1727px;top:159px;color:#b9bcc2;z-index:3;">uart.c</div>
<svg class="a" style="z-index:3;left:1841px;top:156px" width="30" height="32" viewBox="0 0 30 32"><path d="M14.5 1.5 L26.5 8.5 V23.5 L14.5 30.5 L2.5 23.5 V8.5 Z" fill="#2b2633" stroke="#9a7bd6" stroke-width="2"/><path d="M19.3 12.2 A5.6 5.6 0 1 0 19.3 19.8" fill="none" stroke="#9a7bd6" stroke-width="2"/></svg>
<div class="t" style="left:1883px;top:159px;color:#b9bcc2;z-index:3;">spinlock.c</div>
<svg class="a" style="z-index:3;left:2045px;top:156px" width="30" height="32" viewBox="0 0 30 32"><path d="M14.5 1.5 L26.5 8.5 V23.5 L14.5 30.5 L2.5 23.5 V8.5 Z" fill="#2b2633" stroke="#9a7bd6" stroke-width="2"/><path d="M19.3 12.2 A5.6 5.6 0 1 0 19.3 19.8" fill="none" stroke="#9a7bd6" stroke-width="2"/></svg>
<div class="t" style="left:2087px;top:159px;color:#6593e0;z-index:3;">proc.c</div>
<svg class="i" style="left:1449px;top:165px;z-index:3;" width="15" height="15"><path d="M1.5 1.5 L13.5 13.5 M13.5 1.5 L1.5 13.5" stroke="#868a91" stroke-width="2"/></svg>
<div class="a" style="left:1306px;top:198px;width:174px;height:5px;border-radius:3px;background:#5a5d63;z-index:3;"></div>
<svg class="a" style="left:2209px;top:158px;z-index:3;" width="28" height="28" viewBox="0 0 28 28"><rect x="2" y="2" width="23" height="23" rx="4" fill="#3a2b22" stroke="#b57b56" stroke-width="2"/><path d="M8.5 7.5 V20 M18.5 7.5 V20 M8.5 13.8 H18.5" stroke="#b57b56" stroke-width="2" fill="none"/></svg>
<div class="t" style="left:2249px;top:159px;color:#b9bcc2;z-index:3;;-webkit-mask-image:linear-gradient(90deg,#000 45%,transparent 100%);width:30px;overflow:hidden">ris</div>
<svg class="i" style="left:2308px;top:167px;z-index:3;" width="20" height="12"><path d="M1.5 1.5 L10 10 L18.5 1.5" stroke="#ced0d6" stroke-width="2"/></svg>
<div class="a" style="left:2367.5px;top:159.5px;width:5px;height:5px;border-radius:50%;background:#ced0d6;box-shadow:0 10px 0 #ced0d6,0 20px 0 #ced0d6;z-index:3;"></div>
<svg class="i" style="left:1028px;top:227px" width="32" height="28"><path d="M14 6.5 H28 M20 1 L14 6.5 L20 12" stroke="#5fa868" stroke-width="2"/><path d="M3 19.5 H17 M11.5 14 L17 19.5 L11.5 25" stroke="#d9534f" stroke-width="2"/></svg>
<svg class="i" style="left:1028px;top:711px" width="32" height="28"><path d="M14 6.5 H28 M20 1 L14 6.5 L20 12" stroke="#5fa868" stroke-width="2"/><path d="M3 19.5 H17 M11.5 14 L17 19.5 L11.5 25" stroke="#d9534f" stroke-width="2"/></svg>
<svg class="i" style="left:1027px;top:844px" width="28" height="24"><path d="M2 12 H24 M14.5 2.5 L24 12 L14.5 21.5" stroke="#f2a93b" stroke-width="3.2"/></svg>
<svg class="a" style="left:2211px;top:217px" width="26" height="24" viewBox="0 0 26 24"><path d="M13 1.5 Q14.5 1.5 15.5 3 L24.5 19.5 Q25.5 22.5 22.5 22.5 H3.5 Q0.5 22.5 1.5 19.5 L10.5 3 Q11.5 1.5 13 1.5 Z" fill="#d6ad5a"/><path d="M13 7 V14.5" stroke="#1e1f22" stroke-width="3" stroke-linecap="round"/><circle cx="13" cy="18.6" r="1.7" fill="#1e1f22"/></svg>
<div class="t" style="left:2241px;top:217px;color:#ced0d6;font-size:23px">1</div>
<svg class="i" style="left:2267px;top:218px" width="26" height="28"><path d="M2 10.5 L9 17.5 L23.5 2" stroke="#5fa868" stroke-width="3"/><path d="M2.5 25 L6 21.5 L9.5 25 L13 21.5 L16.5 25 L20 21.5 L23.5 25" stroke="#5fa868" stroke-width="1.8"/></svg>
<div class="t" style="left:2298px;top:217px;color:#ced0d6;font-size:23px">5</div>
<svg class="i" style="left:2334px;top:225px" width="18" height="11"><path d="M1.5 9.5 L9 2 L16.5 9.5" stroke="#ced0d6" stroke-width="2"/></svg>
<svg class="i" style="left:2376px;top:225px" width="18" height="11"><path d="M1.5 1.5 L9 9 L16.5 1.5" stroke="#ced0d6" stroke-width="2"/></svg>
<div class="a" style="left:2380px;top:330px;width:28px;height:4px;background:#627e6a"></div>
<div class="a" style="left:2380px;top:618px;width:28px;height:4px;background:#627e6a"></div>
<div class="a" style="left:2380px;top:630px;width:28px;height:4px;background:#627e6a"></div>
<div class="a" style="left:2380px;top:692px;width:28px;height:4px;background:#c9a55a"></div>
<div class="a" style="left:2380px;top:1010px;width:28px;height:4px;background:#627e6a"></div>
<div class="a" style="left:2380px;top:1059px;width:28px;height:4px;background:#7f9985"></div>
<div class="a" style="left:2380px;top:1128px;width:28px;height:4px;background:#7f9985"></div>
<div class="a" style="left:2380px;top:1136px;width:28px;height:4px;background:#7f9985"></div>
<div class="a" style="left:2386px;top:1052px;width:16px;height:129px;border-radius:8px;background:rgba(110,112,118,0.45)"></div>
<div class="a" style="left:956px;top:1186px;width:1452px;height:1.5px;background:#313438"></div>
<svg class="a" style="left:979px;top:1197px" width="26" height="26" viewBox="0 0 26 26"><rect x="1.5" y="1.5" width="22" height="22" rx="4" fill="#3d2624" stroke="#d9564f" stroke-width="2"/><path d="M15.5 6 Q11.5 5 11.5 9 V20 M8.5 11 H15" stroke="#d9564f" stroke-width="2" fill="none"/></svg>
<div class="t" style="left:1016px;top:1196px;color:#b9bcc2;letter-spacing:1.2px">printfinit</div>
<!-- end editor -->
<!-- debug panel top border -->
<div class="a" style="left:177px;top:1231px;width:2232px;height:2px;background:#1e1f22"></div>
<!-- debug content -->
<div class="t" style="left:202px;top:1252px;font-weight:bold;color:#dfe1e5">调试</div>
<svg class="i" style="left:307px;top:1249px" width="32" height="32"><rect x="1" y="4" width="26" height="21" rx="4" fill="#43454a" stroke="#ced0d6"/><path d="M5 11 H8 M10.5 11 H13.5" stroke-width="2"/><circle cx="24.5" cy="5" r="5.5" fill="#5fb865" stroke="none"/><path d="M18 31 L30 19 M22 19 H30 V27" stroke="#548af7" stroke-width="2.4" /></svg>
<div class="t" style="left:346px;top:1253px">remote gdb</div>
<svg class="i" style="left:501px;top:1259px" width="15" height="15"><path d="M1.5 1.5 L13.5 13.5 M13.5 1.5 L1.5 13.5" stroke="#868a91" stroke-width="2"/></svg>
<div class="a" style="left:282px;top:1292px;width:256px;height:5px;border-radius:3px;background:#3574f0"></div>
<div class="a" style="left:2311.5px;top:1253px;width:5px;height:5px;border-radius:50%;background:#ced0d6;box-shadow:0 10px 0 #ced0d6,0 20px 0 #ced0d6"></div>
<div class="a" style="left:2353px;top:1265px;width:26px;height:2px;background:#ced0d6"></div>
<div class="a" style="left:177px;top:1296px;width:2231px;height:2px;background:#1e1f22"></div>
<svg class="i" style="left:199px;top:1313px" width="34" height="34"><path d="M12.7 26.6 A11.8 11.8 0 1 1 21.6 7.1" /><path d="M24.4 1.2 V10.5 H15" /><path d="M17.2 19.5 Q17.5 16 20.7 16 Q23.9 16 24.2 19.5" stroke="#5fa868" stroke-width="2"/><ellipse cx="20.7" cy="24.5" rx="4.6" ry="5.3" fill="#26322a" stroke="#5fa868" stroke-width="2"/><path d="M13 20 L16.3 21.8 M28.4 20 L25.1 21.8 M13 29.5 L16.3 27.5 M28.4 29.5 L25.1 27.5" stroke="#5fa868" stroke-width="2"/></svg>
<div class="a" style="left:252px;top:1316px;width:24px;height:24px;border-radius:4px;border:2.2px solid #e0675f;background:#573837"></div>
<div class="a" style="left:296px;top:1308px;width:2px;height:40px;background:#43454a"></div>
<svg class="i" style="left:315px;top:1315px" width="32" height="28"><rect x="1.8" y="1.8" width="6.5" height="23.5" rx="2.2" fill="#26322a" stroke="#5fa868" stroke-width="2.2"/><path d="M13.5 3.5 Q13.5 1.5 15.5 2.8 L28.5 12 Q30 13.5 28.5 15 L15.5 24.2 Q13.5 25.5 13.5 23.5 Z" fill="#26322a" stroke="#5fa868" stroke-width="2.2"/></svg>
<svg class="i" style="left:372px;top:1316px" width="22" height="26"><rect x="1.5" y="1.5" width="6" height="23" rx="1.5" stroke="#6f737a" stroke-width="2.2"/><rect x="13.5" y="1.5" width="6" height="23" rx="1.5" stroke="#6f737a" stroke-width="2.2"/></svg>
<svg class="i" style="left:421px;top:1314px" width="28" height="30"><path d="M1.4 16.3 L11.9 5.8 L24.3 16.9 M24.3 5.8 V16.9 H13 M1.4 26.8 H24.3" stroke-width="2"/></svg>
<svg class="i" style="left:473px;top:1313px" width="28" height="32"><path d="M13 1.5 V19 M5 12 L13 20 L21 12 M1.5 28.5 H25"/></svg>
<svg class="i" style="left:525px;top:1313px" width="28" height="32"><path d="M13 21.5 V3 M5 11 L13 3 L21 11 M1.5 28.5 H25"/></svg>
<div class="a" style="left:570px;top:1308px;width:2px;height:40px;background:#43454a"></div>
<svg class="i" style="left:590px;top:1313px" width="30" height="30"><circle cx="18.8" cy="10.8" r="9" fill="#3f2727" stroke="#e0675f" stroke-width="2"/><circle cx="11.2" cy="18.2" r="10.5" fill="#2b2d30" stroke="none"/><circle cx="11.2" cy="18.2" r="9" fill="#3f2727" stroke="#e0675f" stroke-width="2"/></svg>
<svg class="i" style="left:643px;top:1314px" width="28" height="28"><circle cx="13" cy="13.8" r="10" fill="#3f2727" stroke="#e0675f" stroke-width="2"/><path d="M1 25.5 L24.7 2" stroke="#2b2d30" stroke-width="4.5"/><path d="M1 25.5 L24.7 2" stroke="#ced0d6" stroke-width="2"/></svg>
<div class="a" style="left:705.5px;top:1316px;width:5px;height:5px;border-radius:50%;background:#ced0d6;box-shadow:0 10px 0 #ced0d6,0 20px 0 #ced0d6"></div>
<div class="t" style="left:785px;top:1317px;font-size:24px">线程和变量</div>
<div class="t" style="left:955px;top:1317px;font-size:24px">控制台</div>
<svg class="i" style="left:1076px;top:1318px" width="28" height="24"><rect x="1.5" y="1.5" width="25" height="21" rx="3.5"/><path d="M6.5 7.5 L10.5 10.5 L6.5 13.5 M12.5 16 H18"/></svg>
<div class="t" style="left:1116px;top:1317px;font-size:24px;letter-spacing:-0.5px">GDB</div>
<div class="t" style="left:1219px;top:1317px;font-size:24px">内存视图</div>
<div class="a" style="left:758px;top:1357px;width:172px;height:5px;border-radius:3px;background:#3574f0"></div>
<svg class="i" style="left:2374px;top:1316px" width="25" height="25"><rect x="1.5" y="1.5" width="22" height="22" rx="3.5"/><path d="M10 1.5 V23.5 M10 11.5 H23.5"/></svg>
<div class="a" style="left:177px;top:1361px;width:2231px;height:2px;background:#1e1f22"></div>
<div class="a" style="left:178px;top:1362px;width:444px;height:64px;background:#37393d"></div>
<svg class="i" style="left:203px;top:1383px" width="26" height="22"><path d="M2 11 L9.5 18.5 L24 3" stroke="#c9825b" stroke-width="2.6"/></svg>
<div class="t" style="left:240px;top:1379px">Thread-1 (1.1)</div>
<div class="a" style="left:506px;top:1372px;width:44px;height:44px;border-radius:8px;background:#4b4d52"></div>
<svg class="i" style="left:514px;top:1380px" width="28" height="28"><path d="M2.5 3 H25.5 L16.5 14 V25 L11.5 21.5 V14 Z"/></svg>
<svg class="i" style="left:580px;top:1391px" width="16" height="10"><path d="M1 1.5 L8 8.5 L15 1.5" stroke="#ced0d6" stroke-width="2"/></svg>
<div class="a" style="left:621px;top:1362px;width:2px;height:462px;background:#1e1f22"></div>
<div class="a" style="left:177px;top:1426px;width:2231px;height:2px;background:#1e1f22"></div>
<div class="a" style="left:194px;top:1436px;width:411px;height:44px;border-radius:8px;background:#43454a"></div>
<div class="t" style="left:212px;top:1443px;font-weight:bold;letter-spacing:0.6px">printfinit <span style="font-weight:normal;font-style:italic;color:#dfe1e5;letter-spacing:0.8px">printf.c:177</span></div>
<div class="t" style="left:212px;top:1487px;font-weight:bold;letter-spacing:0.6px">main <span style="font-weight:normal;font-style:italic;color:#868a91;letter-spacing:0.8px">main.c:13</span></div>
<div class="t" style="left:212px;top:1531px;font-weight:bold;letter-spacing:1.6px">start <span style="font-weight:normal;font-style:italic;color:#868a91;letter-spacing:0.8px">start.c:41</span></div>
<div class="a" style="left:646px;top:1376px;width:1622px;height:35px;background:#393b40"></div>
<div class="a" style="left:646px;top:1376px;width:155px;height:35px;background:#35373a"></div>
<div class="t m" style="left:646px;top:1380px;color:#bcbec4">pr.locking</div>
<svg class="i" style="left:2299px;top:1379px" width="34" height="34"><path d="M14.5 1.5 V19 M2 14 H27.5" /><circle cx="14.5" cy="25.5" r="4" stroke="#548af7" stroke-width="2.4"/><circle cx="26" cy="25.5" r="4" stroke="#548af7" stroke-width="2.4"/><path d="M18.5 25 H22" stroke="#548af7" stroke-width="2"/></svg>
<svg class="i" style="left:2366px;top:1391px" width="17" height="10"><path d="M1 1.5 L8.5 8.5 L16 1.5" stroke="#ced0d6" stroke-width="2"/></svg>
<svg class="i" style="left:693px;top:1445px" width="27" height="27"><rect x="1.5" y="1.5" width="23" height="23" rx="3.5"/><path d="M6 7 H20" stroke-width="2.4"/><circle cx="7" cy="13.5" r="1.2" fill="#ced0d6" stroke="none"/><circle cx="13" cy="13.5" r="1.2" fill="#ced0d6" stroke="none"/><circle cx="19" cy="13.5" r="1.2" fill="#ced0d6" stroke="none"/><circle cx="7" cy="19" r="1.2" fill="#ced0d6" stroke="none"/><circle cx="13" cy="19" r="1.2" fill="#ced0d6" stroke="none"/><circle cx="19" cy="19" r="1.2" fill="#ced0d6" stroke="none"/></svg>
<div class="t" style="left:729px;top:1443px"><span style="color:#6e9ff7">结果</span> = <span style="color:#868a91;letter-spacing:1px">{int}</span> 0</div>
<div class="t" style="left:194px;top:1787px;font-size:22px;color:#6f737a">使用 ⌥⌘↑ 和 ⌥⌘↓ 从 IDE 中的任意...</div>
<svg class="i" style="left:591px;top:1795px" width="15" height="15"><path d="M1.5 1.5 L13.5 13.5 M13.5 1.5 L1.5 13.5" stroke="#868a91" stroke-width="2"/></svg>
<div class="a" style="left:1648px;top:1660px;width:740px;height:144px;border-radius:14px;background:#393b40;border:1.5px solid #43454a"></div>
<div class="a" style="left:1678px;top:1692px;width:28px;height:28px;border-radius:50%;background:#548af7"></div>
<div class="a" style="left:1690.5px;top:1698px;width:3.5px;height:3.5px;border-radius:50%;background:#fff"></div>
<div class="a" style="left:1690.5px;top:1703.5px;width:3.5px;height:10px;border-radius:1px;background:#fff"></div>
<div class="t" style="left:1725px;top:1691px">可以将 IDE 项目设置添加到 Git</div>
<div class="t" style="left:1725px;top:1734px;color:#6e9ff7">查看文件</div>
<div class="t" style="left:1860px;top:1734px;color:#6e9ff7">始终添加</div>
<div class="t" style="left:1997px;top:1734px;color:#6e9ff7">不再询问</div>
<div class="a" style="left:140px;top:1842px;width:16px;height:17px;border-radius:3px;border:2px solid #548af7;background:#2d3550"></div>
<div class="t" style="left:164px;top:1832px;color:#aeb1b7">xv6-labs-2024</div>
<svg class="i" style="left:352px;top:1841px" width="12" height="18"><path d="M2 2 L9.5 9 L2 16" stroke="#b9bcc2" stroke-width="2"/></svg>
<div class="t" style="left:382px;top:1832px;color:#aeb1b7">kernel</div>
<svg class="i" style="left:470px;top:1841px" width="12" height="18"><path d="M2 2 L9.5 9 L2 16" stroke="#b9bcc2" stroke-width="2"/></svg>
<svg class="a" style="left:501px;top:1831px" width="30" height="33" viewBox="0 0 30 33"><path d="M15 2 L27.5 9 V24 L15 31 L2.5 24 V9 Z" fill="#2c2635" stroke="#b28bf0" stroke-width="2"/><path d="M19.8 13 A5.6 5.6 0 1 0 19.8 20.5" fill="none" stroke="#b28bf0" stroke-width="2"/><rect x="3" y="0.5" width="10" height="10" fill="#58aad8"/></svg>
<div class="t" style="left:540px;top:1832px;color:#aeb1b7">printf.c</div>
<div class="t" style="left:1556px;top:1833px;color:#aeb1b7;font-size:24px">177:13 (10 字符)</div>
<div class="t" style="left:1766px;top:1832px;color:#aeb1b7;font-size:25px">LF</div>
<div class="t" style="left:1827px;top:1832px;color:#aeb1b7;font-size:25px">UTF-8</div>
<div class="t" style="left:1932px;top:1832px;color:#aeb1b7;font-size:25px">.clang-tidy</div>
<div class="t" style="left:2086px;top:1832px;color:#aeb1b7;font-size:25px">ClangFormat</div>
<div class="t" style="left:2263px;top:1832px;color:#6f737a;font-size:25px">C: printf.c</div>
<svg class="i" style="left:2411px;top:1834px" width="28" height="28"><rect x="1.5" y="12" width="18" height="14" rx="2.5" stroke="#b9bcc2"/><path d="M14 12 V7.5 Q14 2 19.5 2 Q25 2 25 7.5 V10" stroke="#b9bcc2"/><path d="M10.5 17 V21" stroke="#b9bcc2"/></svg>
<!-- end debug -->
<!-- status bar border -->
<div class="a" style="left:112px;top:1823px;width:2362px;height:2px;background:#1e1f22"></div>
</div>
<div class="a" style="left:112px;top:76px;width:2362px;height:1796px;border-radius:22px;border:2px solid #5c5d60;z-index:50"></div>
</body></html>
